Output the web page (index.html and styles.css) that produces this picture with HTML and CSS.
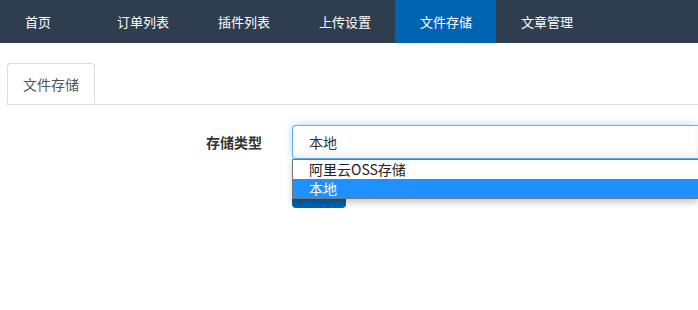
FILE: index.html
```html
<!DOCTYPE html>
<html lang="zh-CN">
<head>
  <meta charset="UTF-8">
  <title>文件存储</title>
  <link rel="stylesheet" href="styles.css">
</head>
<body>
  <div class="navbar">
    <a class="nav-item first">首页</a>
    <a class="nav-item">订单列表</a>
    <a class="nav-item">插件列表</a>
    <a class="nav-item">上传设置</a>
    <a class="nav-item active">文件存储</a>
    <a class="nav-item">文章管理</a>
  </div>

  <div class="content">
    <div class="tabs">
      <div class="tab">文件存储</div>
    </div>

    <form class="form">
      <div class="form-row">
        <label class="label">存储类型</label>
        <div class="select-wrap">
          <div class="select">本地</div>
          <div class="options">
            <div class="option">阿里云OSS存储</div>
            <div class="option selected">本地</div>
          </div>
        </div>
      </div>
      <div class="form-row">
        <span class="label"></span>
        <!-- label hidden behind the open dropdown -->
        <button type="button" class="btn" aria-label="保存"></button>
      </div>
    </form>
  </div>
</body>
</html>
```

FILE: styles.css
```css
body {
  margin: 0;
  font-family: "Noto Sans CJK SC", "Liberation Sans", sans-serif;
  font-size: 13px;
  color: #333;
  background: #fff;
}
.navbar {
  display: flex;
  height: 43px;
  background: #2e3e4f;
}
.nav-item {
  display: flex;
  align-items: center;
  width: 101px;
  padding-left: 25px;
  box-sizing: border-box;
  color: #fff;
  font-size: 13px;
  text-decoration: none;
}
.nav-item.first {
  width: 92px;
}
.nav-item.active {
  background: #0063b1;
}
.content {
  padding: 20px 0 0 7px;
}
.tabs {
  display: flex;
  border-bottom: 1px solid #ddd;
  height: 41px;
}
.tab {
  width: 88px;
  height: 41px;
  box-sizing: border-box;
  border: 1px solid #ddd;
  border-bottom-color: #fff;
  border-radius: 4px 4px 0 0;
  background: #fff;
  padding-left: 15px;
  line-height: 40px;
  font-size: 14px;
  color: #555;
  margin-bottom: -1px;
}
.form {
  padding-top: 20px;
}
.form-row {
  display: flex;
  align-items: center;
  margin-bottom: 15px;
}
.label {
  width: 285px;
  padding-right: 30px;
  box-sizing: border-box;
  text-align: right;
  font-weight: bold;
  font-size: 14px;
}
.select-wrap {
  position: relative;
  flex: 1;
}
.select {
  height: 34px;
  box-sizing: border-box;
  border: 1px solid #66afe9;
  border-right: none;
  border-radius: 4px 0 0 4px;
  box-shadow: inset 0 -4px 6px rgba(0, 0, 0, 0.06), 0 0 8px rgba(102, 175, 233, 0.5);
  padding-left: 16px;
  line-height: 32px;
  font-size: 14px;
  color: #333;
}
.options {
  position: absolute;
  top: 34px;
  left: 0;
  right: 0;
  z-index: 2;
  background: #fff;
  border: 1px solid #767676;
  border-right: none;
  box-shadow: 0 4px 6px rgba(0, 0, 0, 0.2);
}
.option {
  height: 19px;
  line-height: 19px;
  padding-left: 16px;
  font-size: 14px;
  color: #222;
}
.option.selected {
  background: #1e90ff;
  color: #fff;
}
.btn {
  width: 54px;
  height: 34px;
  border: none;
  border-radius: 4px;
  background: #0063b1;
}
```
